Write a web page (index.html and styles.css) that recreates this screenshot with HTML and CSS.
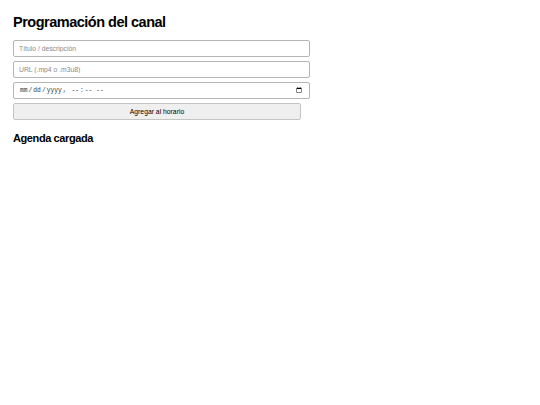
FILE: index.html
```html
<!DOCTYPE html>
<html lang="es">
<head>
  <meta charset="UTF-8" />
  <meta name="viewport" content="width=device-width, initial-scale=1.0"/>
  <title>Programación del canal</title>
  <link rel="stylesheet" href="styles.css">
</head>
<body>
  <h2 class="title">Programación del canal</h2>

  <!-- Formulario para agregar un programa -->
  <form class="schedule-form" id="scheduleForm">
    <input type="text" class="field" placeholder="Título / descripción" />
    <input type="text" class="field" placeholder="URL (.mp4 o .m3u8)" />
    <input type="datetime-local" class="field field-date" />
    <button type="submit" class="btn-add">Agregar al horario</button>
  </form>

  <h3 class="subtitle">Agenda cargada</h3>
  <ul class="agenda" id="agenda"></ul>
</body>
</html>
```

FILE: styles.css
```css
/* Página simples, fundo branco */
body {
  margin: 13px;
  font-family: "Liberation Sans", Arial, sans-serif;
  background: #fff;
  color: #000;
}

.title {
  margin: 0 0 9px;
  font-size: 14.5px;
  font-weight: bold;
  line-height: 18px;
  letter-spacing: -0.5px;
}

/* Formulário */
.schedule-form {
  display: flex;
  flex-direction: column;
  align-items: flex-start;
  gap: 4px;
}

.field {
  box-sizing: border-box;
  width: 297px;
  height: 17px;
  margin: 0;
  padding: 0 5px;
  font-family: "Liberation Sans", Arial, sans-serif;
  font-size: 6.8px;
  color: #000;
  background: #fff;
  border: 1px solid #b5b5b5;
  border-radius: 2px;
  outline: none;
}
.field::placeholder {
  color: #8a8a8a;
}

.field-date {
  font-family: "Liberation Mono", "DejaVu Sans Mono", monospace;
  font-size: 6.3px;
  color: #333;
}

.btn-add {
  box-sizing: border-box;
  width: 288px;
  height: 17px;
  margin: 0;
  padding: 0;
  font-family: "Liberation Sans", Arial, sans-serif;
  font-size: 6.8px;
  color: #000;
  background: #efefef;
  border: 1px solid #c4c4c4;
  border-radius: 2px;
  cursor: pointer;
}

.subtitle {
  margin: 12px 0 0;
  font-size: 11px;
  font-weight: bold;
  line-height: 13px;
  letter-spacing: -0.4px;
}

.agenda {
  margin: 0;
  padding: 0;
  list-style: none;
}
```
